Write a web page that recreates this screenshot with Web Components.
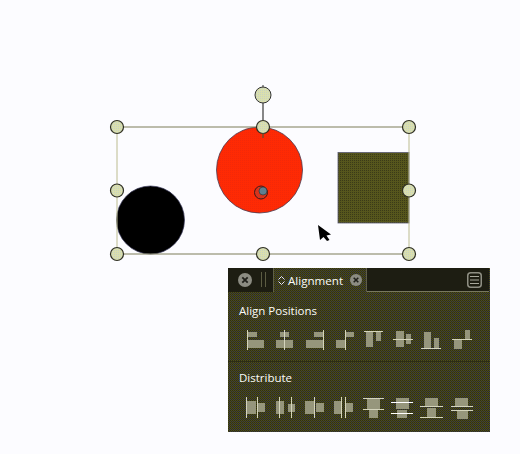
<!DOCTYPE html>
<html>
<head>
<meta charset="utf-8">
<title>Alignment</title>
<style>
  html, body { margin: 0; height: 100%; background: #fcfcff; }
  body { width: 520px; height: 454px; overflow: hidden; font-family: "Open Sans", "Liberation Sans", sans-serif; }
</style>
</head>
<body>
<draw-canvas>
  <align-panel>
    <panel-section title="Align Positions" icons="position"></panel-section>
    <panel-section title="Distribute" icons="distribute"></panel-section>
  </align-panel>
</draw-canvas>

<script>
// bars: [x, y, w, h], rules: [x, y, w, h], all relative to a 29x26 cell
const ICONS = {
  position: [
    { bars: [[4,4,9,5],[4,12,16,8]], rules: [[3,2,1,20]] },
    { bars: [[7,4,9,5],[3,12,17,8]], rules: [[11,2,1,20]] },
    { bars: [[11,4,9,5],[3,12,17,8]], rules: [[20,2,1,20]] },
    { bars: [[14,4,8,5],[4,12,9,8]], rules: [[13,2,1,20]] },
    { bars: [[4,3,7,16],[14,3,5,10]], rules: [[2,3,19,1]] },
    { bars: [[5,3,8,16],[15,6,5,10]], rules: [[2,11,20,1]] },
    { bars: [[4,4,7,16],[14,10,5,10]], rules: [[1,20,20,1]] },
    { bars: [[4,12,8,9],[15,2,5,9]], rules: [[2,11,20,1]] }
  ],
  distribute: [
    { bars: [[3,6,9,13],[14,8,7,9]], rules: [[2,2,1,21],[13,2,1,21]] },
    { bars: [[3,6,8,13],[15,9,7,8]], rules: [[6,2,1,21],[18,2,1,21]] },
    { bars: [[2,6,9,13],[13,8,8,9]], rules: [[11,2,1,21]] },
    { bars: [[2,6,7,13],[14,8,7,9]], rules: [[9,2,1,21],[13,2,1,21]] },
    { bars: [[5,4,13,10],[7,15,9,8]], rules: [[1,3,21,1],[1,14,21,1]] },
    { bars: [[5,3,13,11],[6,15,10,8]], rules: [[0,7,22,1],[0,18,22,1]], bright: true },
    { bars: [[5,3,13,8],[7,13,9,9]], rules: [[0,11,23,1],[0,22,23,1]] },
    { bars: [[5,3,13,8],[7,16,11,8]], rules: [[1,11,22,1],[1,15,22,1]] }
  ]
};

class DrawCanvas extends HTMLElement {
  constructor() {
    super();
    this.attachShadow({ mode: 'open' });
  }

  connectedCallback() {
    const handles = [
      [117,127],[263,127],[409,127],
      [117,190.5],[409,190.5],
      [117,254],[263,254],[409,254]
    ].map(([x, y]) => `<circle class="handle" cx="${x}" cy="${y}" r="6.5"/>`).join('');

    this.shadowRoot.innerHTML = `
      <style>
        :host { display: block; position: relative; width: 520px; height: 454px; }
        svg { position: absolute; left: 0; top: 0; }
        .handle { fill: url(#pale); stroke: #2e2e22; stroke-width: 1.2; }
        ::slotted(*) { position: absolute; left: 228px; top: 268px; }
      </style>
      <svg width="520" height="454" viewBox="0 0 520 454">
        <defs>
          <pattern id="red" width="2" height="2" patternUnits="userSpaceOnUse">
            <rect width="2" height="2" fill="#ff2a04"/>
            <rect width="1" height="1" fill="#f42808"/>
          </pattern>
          <pattern id="olive" width="2" height="2" patternUnits="userSpaceOnUse">
            <rect width="2" height="2" fill="#56561c"/>
            <rect width="1" height="1" fill="#3a3a18"/>
          </pattern>
          <pattern id="pale" width="2" height="2" patternUnits="userSpaceOnUse">
            <rect width="2" height="2" fill="#dadfae"/>
            <rect width="1" height="1" fill="#c8d4c0"/>
          </pattern>
        </defs>
        <circle cx="150.5" cy="220" r="34" fill="#000" stroke="#3a3a5c" stroke-width=".7"/>
        <circle cx="259.5" cy="170" r="43" fill="url(#red)" stroke="#4a3a50" stroke-width=".8"/>
        <rect x="338" y="152.5" width="71" height="70.5" fill="url(#olive)" stroke="#5a5a70" stroke-width=".8"/>
        <path d="M117 127H409M117 254H409" stroke="#7c7c58" stroke-width="1" fill="none"/>
        <path d="M117 127V254M409 127V254" stroke="#bcbc90" stroke-width="1" fill="none"/>
        <path d="M263 85V88" stroke="#555" stroke-width="1.2"/>
        <path d="M263 103V120" stroke="#555" stroke-width="1.4"/>
        <circle cx="263" cy="95" r="8" fill="url(#pale)" stroke="#333" stroke-width="1"/>
        ${handles}
        <path d="M263 133V138" stroke="#553" stroke-width="1.2"/>
        <circle cx="261" cy="192.5" r="6.5" fill="#d8341c" stroke="#3a1a1a" stroke-width="1"/>
        <circle cx="263" cy="191" r="4" fill="#5f7f90" stroke="#333" stroke-width=".7"/>
        <path d="M318 225L331 234.5L326.5 235.5L329.5 240L327 241L323.5 237L320 240Z" fill="#000"/>
      </svg>
      <slot></slot>
    `;
  }
}

class AlignPanel extends HTMLElement {
  constructor() {
    super();
    this.attachShadow({ mode: 'open' });
  }

  connectedCallback() {
    this.shadowRoot.innerHTML = `
      <style>
        :host {
          display: block;
          width: 262px;
          height: 164px;
          color: #fbfbf6;
          background: conic-gradient(#4e4e18 25%, #26263e 0 50%, #4e4e18 0 75%, #2e2e14 0) 0 0 / 2px 2px;
        }
        .bar { display: flex; height: 24px; box-sizing: border-box; }
        .left {
          width: 45px;
          display: flex;
          align-items: center;
          gap: 9px;
          padding-left: 10px;
          box-sizing: border-box;
          background: #1d1d12;
          border-bottom: 1px solid #1d1d12;
        }
        .close { flex: none; display: block; }
        .grip { width: 5px; height: 15px; border-left: 1px solid #5c5c42; border-right: 1px solid #5c5c42; box-sizing: border-box; }
        .tab {
          width: 94px;
          display: flex;
          align-items: center;
          box-sizing: border-box;
          padding-left: 3px;
          font-size: 11.6px;
          border-left: 1px solid #5e5e48;
          border-right: 1px solid #5e5e48;
        }
        .updown { width: 9px; height: 11px; margin-right: 2px; flex: none; }
        .tab .close { margin-left: 7px; }
        .rest {
          flex: 1;
          display: flex;
          justify-content: flex-end;
          align-items: center;
          padding-right: 7px;
          background: #1d1d12;
          border-bottom: 1px solid #77775f;
          margin-right: 1px;
        }
        .body { display: flex; flex-direction: column; }
      </style>
      <div class="bar">
        <div class="left">
          <svg class="close" width="14" height="14" viewBox="0 0 14 14"><circle cx="7" cy="7" r="7" fill="#8c8c82"/><path d="M4.3 4.3L9.7 9.7M9.7 4.3L4.3 9.7" stroke="#20201a" stroke-width="1.8"/></svg>
          <span class="grip"></span>
        </div>
        <div class="tab">
          <svg class="updown" viewBox="0 0 9 11"><path d="M1.5 4.5L4.5 1.5L7.5 4.5M1.5 6.5L4.5 9.5L7.5 6.5" fill="none" stroke="#f0f0e8" stroke-width="1"/></svg>
          <span>Alignment</span>
          <svg class="close" width="12" height="12" viewBox="0 0 14 14"><circle cx="7" cy="7" r="7" fill="#8c8c82"/><path d="M4.3 4.3L9.7 9.7M9.7 4.3L4.3 9.7" stroke="#20201a" stroke-width="1.8"/></svg>
        </div>
        <div class="rest">
          <svg width="15" height="16" viewBox="0 0 15 16"><rect x=".75" y=".75" width="13.5" height="14.5" rx="3" fill="none" stroke="#8f8f84" stroke-width="1.5"/><path d="M3 4.5H12M3 8H12M3 11.5H12" stroke="#a8a89c" stroke-width="1.2"/></svg>
        </div>
      </div>
      <div class="body"><slot></slot></div>
    `;
  }
}

class PanelSection extends HTMLElement {
  constructor() {
    super();
    this.attachShadow({ mode: 'open' });
  }

  connectedCallback() {
    const list = ICONS[this.getAttribute('icons')] || [];
    const cells = list.map(icon => {
      const bars = icon.bars.map(([x, y, w, h]) => `<rect class="b" x="${x}" y="${y}" width="${w}" height="${h}"/>`).join('');
      const rules = icon.rules.map(([x, y, w, h]) => `<rect class="${icon.bright ? 'w' : 'r'}" x="${x}" y="${y}" width="${w}" height="${h}"/>`).join('');
      return `<svg width="29.4" height="26" viewBox="0 0 29.4 26">${bars}${rules}</svg>`;
    }).join('');

    this.shadowRoot.innerHTML = `
      <style>
        :host { display: block; height: 67px; padding-left: 11px; box-sizing: border-box; }
        :host(:last-child) { background: linear-gradient(#2c2c16, #2c2c16) 0 2px / 100% 1px no-repeat; }
        .title { font-size: 11.5px; line-height: 16px; padding-top: 11px; }
        .icons { display: flex; margin: 9px 0 0 5px; }
        .b { fill: #96967c; }
        .r { fill: #d4d4bc; }
        .w { fill: #fff; }
      </style>
      <div class="title">${this.getAttribute('title')}</div>
      <div class="icons">${cells}</div>
    `;
  }
}

customElements.define('panel-section', PanelSection);
customElements.define('align-panel', AlignPanel);
customElements.define('draw-canvas', DrawCanvas);
</script>
</body>
</html>
